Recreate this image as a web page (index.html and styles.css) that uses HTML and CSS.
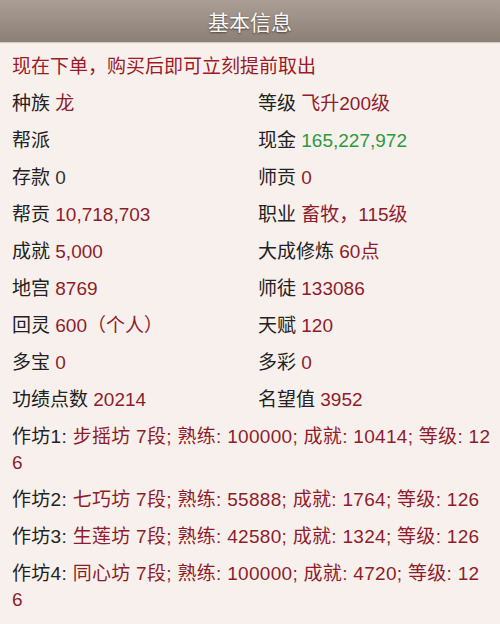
FILE: index.html
```html
<!DOCTYPE html>
<html lang="zh">
<head>
<meta charset="utf-8">
<title>基本信息</title>
<link rel="stylesheet" href="styles.css">
</head>
<body>
<header class="topbar"><h1 class="title">基本信息</h1></header>
<main class="content">
  <p class="notice">现在下单，购买后即可立刻提前取出</p>
  <div class="grid">
    <div class="item"><span class="k">种族</span> <span class="v">龙</span></div>
    <div class="item"><span class="k">等级</span> <span class="v">飞升200级</span></div>
    <div class="item"><span class="k">帮派</span></div>
    <div class="item"><span class="k">现金</span> <span class="v green">165,227,972</span></div>
    <div class="item"><span class="k">存款</span> <span class="v plain">0</span></div>
    <div class="item"><span class="k">师贡</span> <span class="v">0</span></div>
    <div class="item"><span class="k">帮贡</span> <span class="v">10,718,703</span></div>
    <div class="item"><span class="k">职业</span> <span class="v">畜牧，115级</span></div>
    <div class="item"><span class="k">成就</span> <span class="v">5,000</span></div>
    <div class="item"><span class="k">大成修炼</span> <span class="v">60点</span></div>
    <div class="item"><span class="k">地宫</span> <span class="v">8769</span></div>
    <div class="item"><span class="k">师徒</span> <span class="v">133086</span></div>
    <div class="item"><span class="k">回灵</span> <span class="v">600（个人）</span></div>
    <div class="item"><span class="k">天赋</span> <span class="v">120</span></div>
    <div class="item"><span class="k">多宝</span> <span class="v">0</span></div>
    <div class="item"><span class="k">多彩</span> <span class="v">0</span></div>
    <div class="item"><span class="k">功绩点数</span> <span class="v">20214</span></div>
    <div class="item"><span class="k">名望值</span> <span class="v">3952</span></div>
  </div>
  <p class="item wide"><span class="k">作坊1: </span><span class="v">步摇坊 7段; 熟练: 100000; 成就: 10414; 等级: 126</span></p>
  <p class="item wide"><span class="k">作坊2: </span><span class="v">七巧坊 7段; 熟练: 55888; 成就: 1764; 等级: 126</span></p>
  <p class="item wide"><span class="k">作坊3: </span><span class="v">生莲坊 7段; 熟练: 42580; 成就: 1324; 等级: 126</span></p>
  <p class="item wide short"><span class="k">作坊4: </span><span class="v">同心坊 7段; 熟练: 100000; 成就: 4720; 等级: 126</span></p>
</main>
</body>
</html>
```
FILE: styles.css
```css
* { box-sizing: border-box; }
html, body { margin: 0; padding: 0; }
body {
  width: 500px;
  height: 624px;
  overflow: hidden;
  background: #f8f0ed;
  font-family: "Liberation Sans", "Noto Sans CJK SC", sans-serif;
  color: #222;
}
.topbar {
  height: 42px;
  background: linear-gradient(#ab9e94, #8c7f75);
  display: flex;
  align-items: center;
  justify-content: center;
  box-shadow: 0 1px 1px rgba(0,0,0,0.15);
}
.title {
  margin: 0;
  font-size: 21px;
  font-weight: normal;
  color: #fbf8f5;
  text-shadow: 0 1px 2px rgba(0,0,0,0.55);
  font-family: "Noto Sans CJK SC", sans-serif;
}
.content {
  padding: 12px 8px 0 12px;
  font-size: 19px;
  line-height: 26px;
}
.notice {
  margin: 0 0 11px 0;
  color: #9b1b26;
}
.grid {
  display: grid;
  grid-template-columns: 246px 1fr;
  row-gap: 11px;
}
.item { white-space: nowrap; }
.k { color: #222; }
.v { color: #8e1d2b; }
.v.plain { color: #333; }
.v.green { color: #2c9a3c; }
.wide {
  margin: 11px 0 0 0;
  white-space: normal;
  word-break: break-all;
  letter-spacing: 0.3px;
}
.wide.short { max-width: 473px; }
```
